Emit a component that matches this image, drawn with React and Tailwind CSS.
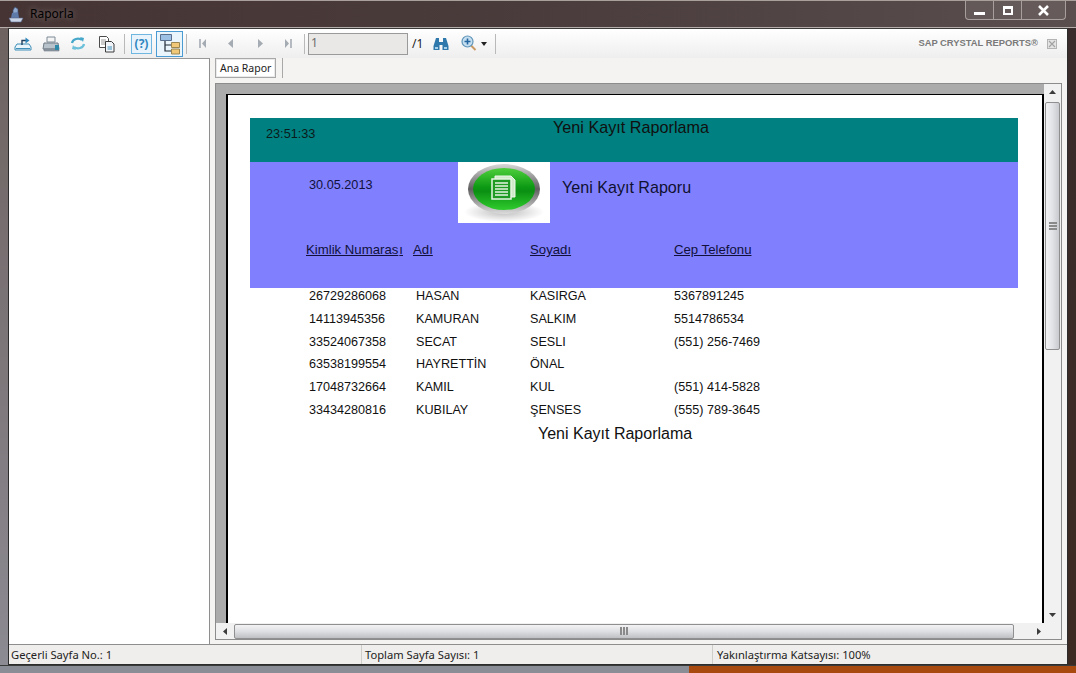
const rows = [
  ["26729286068", "HASAN", "KASIRGA", "5367891245"],
  ["14113945356", "KAMURAN", "SALKIM", "5514786534"],
  ["33524067358", "SECAT", "SESLI", "(551) 256-7469"],
  ["63538199554", "HAYRETTİN", "ÖNAL", ""],
  ["17048732664", "KAMIL", "KUL", "(551) 414-5828"],
  ["33434280816", "KUBILAY", "ŞENSES", "(555) 789-3645"],
];

const Sep = ({ className = "" }) => <div className={`w-px h-[20px] bg-[#b9b9b9] ${className}`} />;

function AppIcon() {
  return (
    <svg width="16" height="17" viewBox="0 0 16 17" className="ml-[8px]">
      <path d="M7 1l3 2v9H5V4z" fill="#8fa9cf" stroke="#3d4d6e" strokeWidth=".7" />
      <path d="M4 7l6-1 1 6H3z" fill="#5d7aa8" />
      <path d="M1 12h14l-2 4H3z" fill="#c9d4e6" stroke="#56668a" strokeWidth=".6" />
    </svg>
  );
}

function ExportIcon() {
  return (
    <svg width="18" height="18" viewBox="0 0 18 18">
      <path d="M1 12l2-3h12l2 3v3H1z" fill="#eaf4fb" stroke="#3f8fb8" />
      <path d="M2 13.5h14" stroke="#3f8fb8" />
      <path d="M8 10V5.5h4" fill="none" stroke="#1f3f5f" strokeWidth="1.4" />
      <path d="M11.5 2.5l4 3-4 3z" fill="#2f86b8" />
    </svg>
  );
}
function PrintIcon() {
  return (
    <svg width="18" height="18" viewBox="0 0 18 18">
      <path d="M5 2h8v5H5z" fill="#f4f4f4" stroke="#7f8c96" />
      <path d="M2 8h14l1 6H1z" fill="#b8c2ca" stroke="#6e7b86" />
      <path d="M2 14h15v2H2z" fill="#8f9aa3" stroke="#6e7b86" strokeWidth=".6" />
      <path d="M13 10h4v5h-4z" fill="#2e8aa8" />
    </svg>
  );
}
function RefreshIcon() {
  return (
    <svg width="16" height="17" viewBox="0 0 16 17">
      <path d="M2 8a6 5 0 0 1 10-3" fill="none" stroke="#45a7c9" strokeWidth="2.2" />
      <path d="M10 2l4 1-1 4z" fill="#45a7c9" />
      <path d="M14 9a6 5 0 0 1-10 3" fill="none" stroke="#6cc0da" strokeWidth="2.2" />
      <path d="M6 15l-4-1 1-4z" fill="#6cc0da" />
    </svg>
  );
}
function CopyIcon() {
  return (
    <svg width="17" height="18" viewBox="0 0 17 18">
      <path d="M1.5 1.5h7l2 2v9h-9z" fill="#fff" stroke="#4b4b4b" />
      <path d="M3 5h5M3 7h5M3 9h5" stroke="#9a9a9a" />
      <path d="M7.5 6.5h6l2.5 2.5v8h-8.5z" fill="#f2f6fa" stroke="#3c3c3c" />
      <path d="M9.5 12h4.5M9.5 14h4.5" stroke="#3f8fb8" />
    </svg>
  );
}
function TreeIcon() {
  return (
    <svg width="22" height="22" viewBox="0 0 22 22">
      <path d="M1.5 1.5h11v6h-11z" fill="#9cc0e4" stroke="#5a6f8c" />
      <path d="M6 8v10h6M6 12h6" fill="none" stroke="#1f2a36" strokeWidth="1.2" />
      <path d="M12.5 9.5h8v5h-8zM12.5 16h8v5h-8z" fill="#f0c878" stroke="#9a8652" />
    </svg>
  );
}
function NavIcon({ dir, end }) {
  const left = dir === "l";
  return (
    <svg width="8" height="11" viewBox="0 0 8 11">
      {left ? <path d={end ? "M7 1v9L3 5.5z" : "M6 1v9L1 5.5z"} fill="#a4abb2" /> : <path d={end ? "M1 1v9l4-4.5z" : "M2 1v9l5-4.5z"} fill="#a4abb2" />}
      {end && <path d={left ? "M1 1v9" : "M7 1v9"} stroke="#a4abb2" strokeWidth="1.6" />}
    </svg>
  );
}
function BinocularIcon() {
  return (
    <svg width="16" height="14" viewBox="0 0 16 14">
      <path d="M3 1h3v4h4V1h3l2.5 8v4H9.5V8h-3v5H.5V9z" fill="#2f78ab" />
      <path d="M2 10h3v2H2zM11 10h3v2h-3z" fill="#a8d2ec" />
    </svg>
  );
}
function ZoomIcon() {
  return (
    <svg width="16" height="17" viewBox="0 0 16 17">
      <path d="M9.5 10l5 5" stroke="#c99a63" strokeWidth="2" />
      <circle cx="6.5" cy="6.5" r="5.5" fill="#c6dff0" stroke="#5f94b8" strokeWidth="1.2" />
      <path d="M3.5 6.5h6M6.5 3.5v6" stroke="#2467a0" strokeWidth="1.6" />
    </svg>
  );
}
function ReportLogo() {
  return (
    <div className="w-[92px] h-[61px] bg-white shrink-0 flex justify-center">
      <svg width="92" height="61" viewBox="0 0 92 61">
        <defs>
          <linearGradient id="ring" x1="0" y1="0" x2="0" y2="1">
            <stop offset="0" stopColor="#d8d8d8" />
            <stop offset=".5" stopColor="#5f5f5f" />
            <stop offset="1" stopColor="#dcdcdc" />
          </linearGradient>
          <linearGradient id="green" x1="0" y1="0" x2="0" y2="1">
            <stop offset="0" stopColor="#4fd03c" />
            <stop offset=".45" stopColor="#0d9a14" />
            <stop offset=".55" stopColor="#0a8f12" />
            <stop offset="1" stopColor="#30cc2e" />
          </linearGradient>
          <radialGradient id="shadow">
            <stop offset="0" stopColor="#bdbdbd" />
            <stop offset="1" stopColor="#ffffff" />
          </radialGradient>
        </defs>
        <ellipse cx="46" cy="50" rx="40" ry="10" fill="url(#shadow)" />
        <ellipse cx="46" cy="27" rx="36" ry="25" fill="url(#ring)" />
        <ellipse cx="46" cy="27" rx="31" ry="21" fill="url(#green)" />
        <path d="M37 14h16l4 4v17H37z" fill="#cfe9c9" stroke="#eef8ea" />
        <path d="M34 17h19v20H34z" fill="#1f9a22" stroke="#e6f5e2" strokeWidth="1.5" />
        <path d="M37 21h13M37 24h13M37 27h13M37 30h13M37 33h13" stroke="#e6f5e2" strokeWidth="1.6" />
      </svg>
    </div>
  );
}
function Arrow({ d }) {
  return (
    <svg width="7" height="7" viewBox="0 0 7 7">
      <path d={d} fill="#3c3c3c" />
    </svg>
  );
}

const thumbV = "bg-gradient-to-r from-[#f3f3f5] via-[#e2e3e7] to-[#c9cacf] border border-[#8f8f8f] rounded-[2px]";
const thumbH = "bg-gradient-to-b from-[#f3f3f5] via-[#dedfe2] to-[#bfc0c3] border border-[#8f8f8f] rounded-[2px]";

export default function App() {
  return (
    <div
      className="w-[1076px] h-[673px] overflow-hidden flex flex-col bg-[#3c2f2f] border-t border-[#a9a09c]"
      style={{ fontFamily: '"Noto Sans", sans-serif' }}
    >
      {/* Title bar */}
      <div className="h-[27px] shrink-0 flex items-start bg-gradient-to-r from-[#463434] via-[#4a3c3c] to-[#5a4e4e] border-b border-[#b5aeaa]">
        <div className="mt-[5px]"><AppIcon /></div>
        <span className="ml-[6px] mt-[5px] text-[12px] leading-[16px] text-black [text-shadow:0_0_6px_rgba(255,255,255,0.35)]">Raporla</span>
        <div className="ml-auto mr-[10px] h-[19px] w-[101px] flex border border-t-0 border-[#a79f9c] rounded-b-[4px] bg-[#ffffff14]">
          <div className="w-[28px] flex items-end justify-center pb-[4px] border-r border-[#a79f9c]">
            <div className="w-[11px] h-[3px] bg-white" />
          </div>
          <div className="w-[28px] flex items-center justify-center border-r border-[#a79f9c]">
            <div className="w-[10px] h-[9px] border-2 border-t-[3px] border-white" />
          </div>
          <div className="flex-1 flex items-center justify-center">
            <svg width="13" height="11" viewBox="0 0 13 11">
              <path d="M2 1l9 9M11 1l-9 9" stroke="#fff" strokeWidth="2.6" />
            </svg>
          </div>
        </div>
      </div>

      {/* Middle */}
      <div className="flex-1 min-h-0 flex bg-gradient-to-b from-[#463a3a] to-[#5b5760]">
        <div className="w-[8px] shrink-0 bg-gradient-to-b from-[#6d6260] to-[#8c8a92]" />
        <div className="flex-1 min-w-0 flex flex-col border border-[#2c2c2c] bg-[#f0eeec] border-t-[#3a3a3a]">
          {/* Toolbar */}
          <div className="h-[29px] shrink-0 flex items-center bg-gradient-to-b from-white to-[#eeeeee] text-[12px]">
            <div className="ml-[5px] w-[18px]"><ExportIcon /></div>
            <div className="ml-[10px] w-[18px]"><PrintIcon /></div>
            <div className="ml-[10px] w-[16px]"><RefreshIcon /></div>
            <div className="ml-[12px] w-[17px]"><CopyIcon /></div>
            <Sep className="ml-[9px]" />
            <div className="ml-[6px] w-[21px] h-[20px] border border-[#6fb6e0] bg-[#e8f3fb] flex items-center justify-center text-[12px] font-bold text-[#2f86c0] leading-none">
              (?)
            </div>
            <div className="ml-[4px] w-[27px] h-[26px] border border-[#4a9ad4] bg-[#eaf4fb] flex items-center justify-center">
              <TreeIcon />
            </div>
            <Sep className="ml-[3px]" />
            <div className="ml-[12px] w-[8px] flex"><NavIcon dir="l" end /></div>
            <div className="ml-[20px] w-[8px] flex"><NavIcon dir="l" /></div>
            <div className="ml-[21px] w-[8px] flex"><NavIcon dir="r" /></div>
            <div className="ml-[20px] w-[8px] flex"><NavIcon dir="r" end /></div>
            <Sep className="ml-[12px]" />
            <div className="ml-[3px] w-[100px] h-[22px] border border-[#9a9a9a] bg-[#e9e8e6] text-[12px] leading-[18px] pl-[2px] text-[#6d6d6d]">1</div>
            <span className="ml-[4px] text-[12px] text-[#222] w-[14px]">/1</span>
            <div className="ml-[7px] flex"><BinocularIcon /></div>
            <div className="ml-[12px] flex"><ZoomIcon /></div>
            <svg width="6" height="4" viewBox="0 0 6 4" className="ml-[4px]"><path d="M0 0h6L3 4z" fill="#222" /></svg>
            <Sep className="ml-[8px]" />
            <span className="ml-auto text-[9.4px] font-bold text-[#7a7a7a]" style={{ fontFamily: '"Liberation Sans", sans-serif' }}>SAP CRYSTAL REPORTS®</span>
            <div className="ml-[9px] mr-[10px] w-[10px] h-[10px] border border-[#b4b4b4] bg-[#e4e4e4] flex items-center justify-center">
              <svg width="8" height="8" viewBox="0 0 8 8"><path d="M1 1l6 6M7 1L1 7" stroke="#a2a2a2" strokeWidth="1.2" /></svg>
            </div>
          </div>

          {/* Body */}
          <div className="flex-1 min-h-0 flex">
            <div className="w-[201px] shrink-0 bg-white border-r border-[#8e8e8e] border-t border-t-[#9a9a9a]" />
            <div className="flex-1 min-w-0 flex flex-col pl-[5px] pr-[5px] bg-[#f4f3f1]">
              {/* Tab */}
              <div className="h-[25px] shrink-0 flex items-start">
                <div className="h-[20px] px-[4px] border border-[#a8a8a8] bg-white text-[10.5px] leading-[18px] text-[#222] shadow-[inset_0_0_0_1px_#eaeaea]">Ana Rapor</div>
                <div className="w-px h-[20px] bg-[#a8a8a8] ml-[6px]" />
              </div>
              {/* Viewer */}
              <div className="flex-1 min-h-0 mb-[4px] border border-[#8c8c8c] flex flex-col">
                <div className="flex-1 min-h-0 flex">
                  <div className="flex-1 min-w-0 bg-[#ababab] pt-[10px] pl-[10px] overflow-hidden">
                    <div className="w-[818px] h-full bg-white border-l-2 border-r-2 border-t border-black overflow-hidden pt-[23px] pl-[22px] text-black" style={{ fontFamily: '"Liberation Sans", sans-serif' }}>
                      {/* Teal band */}
                      <div className="w-[768px] h-[44px] bg-[#008080] flex items-start">
                        <span className="ml-[16px] mt-[9px] w-[287px] text-[12.7px] leading-[15px] text-[#0b1a1a]">23:51:33</span>
                        <span className="text-[16.2px] leading-[18px] text-[#101010]">Yeni Kayıt Raporlama</span>
                      </div>
                      {/* Purple band */}
                      <div className="w-[768px] h-[126px] bg-[#8080ff] flex flex-col">
                        <div className="flex items-start h-[61px]">
                          <span className="ml-[59px] w-[149px] mt-[16px] text-[12.7px] leading-[15px] text-[#10103a]">30.05.2013</span>
                          <ReportLogo />
                          <span className="ml-[12px] mt-[16px] text-[16.1px] leading-[18px] text-[#101030]">Yeni Kayıt Raporu</span>
                        </div>
                        <div className="mt-[19px] grid grid-cols-[107px_117px_144px_1fr] pl-[56px] text-[13.2px] leading-[15px] text-[#10103a]">
                          <span className="underline whitespace-nowrap">Kimlik Numaras<span className="ml-[1px]">ı</span></span>
                          <span className="underline">Adı</span>
                          <span className="underline">Soyadı</span>
                          <span className="underline">Cep Telefonu</span>
                        </div>
                      </div>
                      {/* Rows */}
                      <div className="pt-[1px]">
                        {rows.map((r) => (
                          <div key={r[0]} className="h-[22.8px] grid grid-cols-[107px_114px_144px_1fr] pl-[59px] text-[12.6px] leading-[14px] text-[#111]">
                            {r.map((c, i) => (
                              <span key={i} className="whitespace-nowrap">{c}</span>
                            ))}
                          </div>
                        ))}
                      </div>
                      <div className="pl-[288px] text-[16px] leading-[16px] text-[#111]">Yeni Kayıt Raporlama</div>
                    </div>
                  </div>
                  {/* Vertical scrollbar */}
                  <div className="w-[17px] shrink-0 bg-[#f1f1f1] flex flex-col items-center">
                    <div className="h-[17px] flex items-center justify-center"><Arrow d="M3.5 1L7 5H0z" /></div>
                    <div className={`w-[15px] h-[248px] mt-[1px] flex items-center justify-center ${thumbV}`}>
                      <div className="w-[8px] h-[8px] border-y-2 border-[#8a8a8a] flex items-center"><div className="w-full h-[2px] bg-[#8a8a8a]" /></div>
                    </div>
                    <div className="mt-auto h-[17px] flex items-center justify-center"><Arrow d="M0 2h7L3.5 6z" /></div>
                  </div>
                </div>
                {/* Horizontal scrollbar */}
                <div className="h-[16px] shrink-0 bg-[#f1f1f1] flex items-center">
                  <div className="w-[18px] flex items-center justify-center"><Arrow d="M5 0v7L1 3.5z" /></div>
                  <div className={`w-[780px] h-[15px] flex items-center justify-center ${thumbH}`}>
                    <div className="w-[8px] h-[8px] border-x-2 border-[#8a8a8a] flex justify-center"><div className="h-full w-[2px] bg-[#8a8a8a]" /></div>
                  </div>
                  <div className="ml-auto w-[17px] mr-[14px] flex items-center justify-center"><Arrow d="M2 0v7l4-3.5z" /></div>
                </div>
              </div>
            </div>
          </div>

          {/* Status bar */}
          <div className="h-[20px] shrink-0 flex bg-[#f0eeec] border-t border-[#8e8e8e] text-[11.2px] leading-[19px] text-[#222]">
            <div className="w-[353px] pl-[2px] border-r border-[#cfcdca]">Geçerli Sayfa No.: 1</div>
            <div className="w-[351px] pl-[3px] border-r border-[#cfcdca]">Toplam Sayfa Sayısı: 1</div>
            <div className="flex-1 pl-[4px]">Yakınlaştırma Katsayısı: 100%</div>
          </div>
        </div>
        <div className="w-[8px] shrink-0 bg-gradient-to-b from-[#3a2c2c] to-[#3d2a22]" />
      </div>

      {/* Bottom frame */}
      <div className="h-[8px] shrink-0 bg-gradient-to-r from-[#8a8c96] via-[#8a8c96] via-[64%] to-[#a8490f] to-[64%] border-t border-[#3a3a3a]" />
    </div>
  );
}
